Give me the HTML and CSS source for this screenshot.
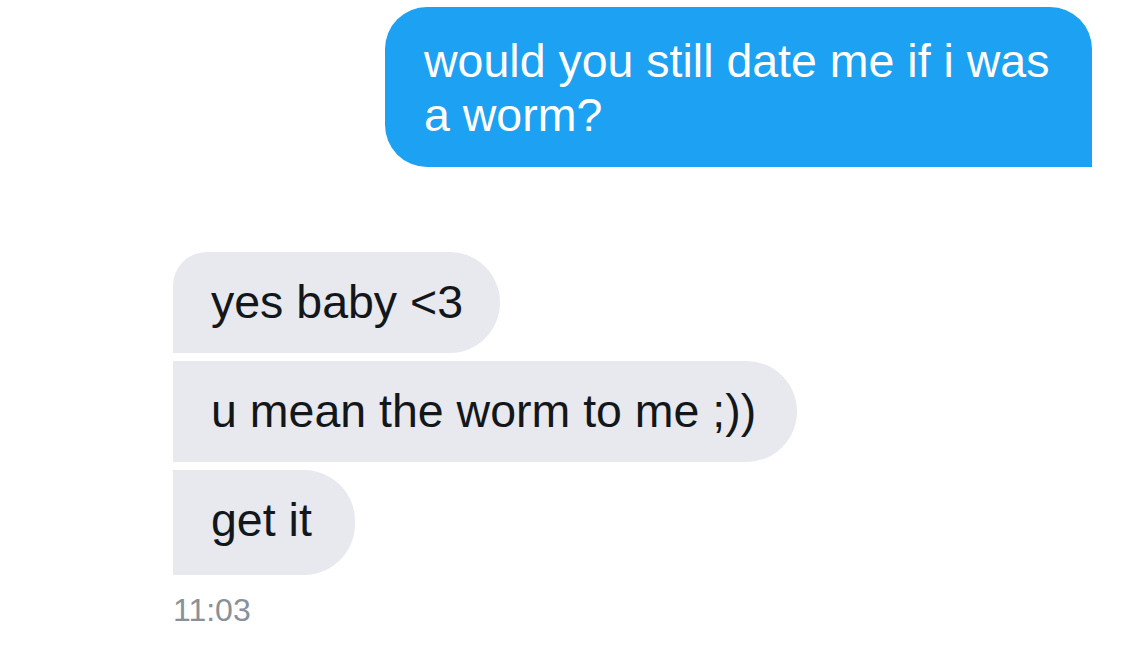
FILE: index.html
```html
<!DOCTYPE html>
<html>
<head>
<meta charset="utf-8">
<link rel="stylesheet" href="styles.css">
</head>
<body>
<div class="chat">
  <div class="row row-sent">
    <div class="bubble sent">would you still date me if i was a worm?</div>
  </div>
  <div class="group">
    <div class="bubble recv first">yes baby &lt;3</div>
    <div class="bubble recv">u mean the worm to me ;))</div>
    <div class="bubble recv last">get it</div>
    <div class="time">11:03</div>
  </div>
</div>
</body>
</html>
```

FILE: styles.css
```css
html, body {
  margin: 0;
  padding: 0;
  background: #ffffff;
}
body {
  width: 1140px;
  height: 648px;
  overflow: hidden;
  font-family: "Liberation Sans", Arial, Helvetica, sans-serif;
}
.chat {
  display: flex;
  flex-direction: column;
  padding-top: 7px;
}
.row-sent {
  display: flex;
  justify-content: flex-end;
  padding-right: 48px;
}
.bubble {
  font-size: 46.5px;
  line-height: 54px;
  box-sizing: border-box;
}
.sent {
  background: #1da1f2;
  color: #ffffff;
  width: 707px;
  padding: 27px 30px 25px 39px;
  border-radius: 42px 42px 0 42px;
}
.group {
  display: flex;
  flex-direction: column;
  align-items: flex-start;
  gap: 8px;
  margin-top: 85px;
  margin-left: 173px;
}
.recv {
  background: #e7e9ef;
  color: #14171a;
  padding: 23px 41px 24px 38px;
  border-radius: 0 51px 51px 0;
}
.recv.first {
  padding-right: 37px;
  border-radius: 34px 51px 51px 0;
}
.recv.last {
  padding-right: 43px;
  padding-bottom: 28px;
}
.time {
  margin-top: 9px;
  font-size: 32px;
  color: #8a9099;
}
```
